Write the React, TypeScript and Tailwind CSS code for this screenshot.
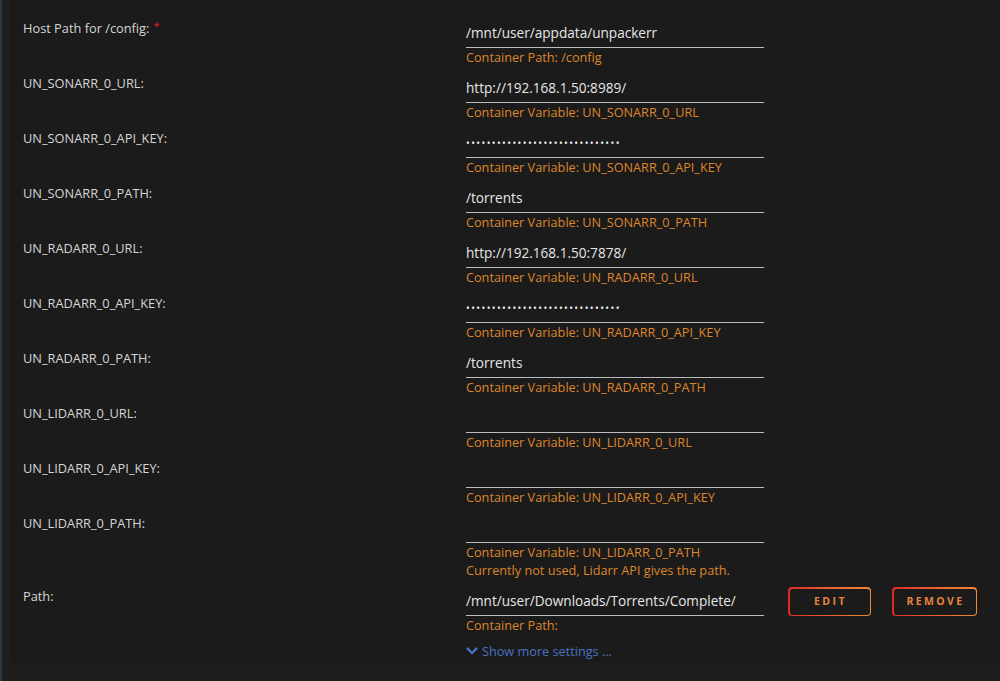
import React from "react";

type Row = {
  label: string;
  required?: boolean;
  value: string;
  password?: boolean;
  desc: string[];
};

const dots = "••••••••••••••••••••••••••••••";

const rows: Row[] = [
  { label: "Host Path for /config:", required: true, value: "/mnt/user/appdata/unpackerr", desc: ["Container Path: /config"] },
  { label: "UN_SONARR_0_URL:", value: "http://192.168.1.50:8989/", desc: ["Container Variable: UN_SONARR_0_URL"] },
  { label: "UN_SONARR_0_API_KEY:", value: dots, password: true, desc: ["Container Variable: UN_SONARR_0_API_KEY"] },
  { label: "UN_SONARR_0_PATH:", value: "/torrents", desc: ["Container Variable: UN_SONARR_0_PATH"] },
  { label: "UN_RADARR_0_URL:", value: "http://192.168.1.50:7878/", desc: ["Container Variable: UN_RADARR_0_URL"] },
  { label: "UN_RADARR_0_API_KEY:", value: dots, password: true, desc: ["Container Variable: UN_RADARR_0_API_KEY"] },
  { label: "UN_RADARR_0_PATH:", value: "/torrents", desc: ["Container Variable: UN_RADARR_0_PATH"] },
  { label: "UN_LIDARR_0_URL:", value: "", desc: ["Container Variable: UN_LIDARR_0_URL"] },
  { label: "UN_LIDARR_0_API_KEY:", value: "", desc: ["Container Variable: UN_LIDARR_0_API_KEY"] },
  { label: "UN_LIDARR_0_PATH:", value: "", desc: ["Container Variable: UN_LIDARR_0_PATH", "Currently not used, Lidarr API gives the path."] },
];

function GradButton({ text, width }: { text: string; width: string }) {
  return (
    <div className={`h-[29px] self-start rounded-[4px] bg-linear-to-r from-[#e0242a] to-[#f08a34] p-[1.5px] ${width}`}>
      <div className="flex h-full items-center justify-center rounded-[3px] bg-[#1b1b1b] pl-[2px] text-[10.5px] font-bold tracking-[2.4px] text-[#e8843a]">
        {text}
      </div>
    </div>
  );
}

function FieldRow({ row }: { row: Row }) {
  return (
    <div className="flex">
      <div className="w-[456px] shrink-0 pl-[13px] pt-[1px] text-[12.8px] leading-[16px] text-[#d6d6d6]">
        {row.label}
        {row.required && <span className="relative -top-[3px] ml-[4px] text-[11px] text-[#e0222a]">*</span>}
      </div>
      <div className="w-[298px]">
        <div className="flex h-[29px] items-center border-b border-[#bdbdbd] text-[13.6px] text-[#e6e6e6]">
          {row.password ? (
            <span className="text-[10px] leading-none tracking-[1.4px] text-[#f0f0f0]">{row.value}</span>
          ) : (
            row.value
          )}
        </div>
        {row.desc.map((d) => (
          <div key={d} className="text-[12.7px] leading-[18px] text-[#de862a]">
            {d}
          </div>
        ))}
      </div>
    </div>
  );
}

export default function App() {
  return (
    <div
      className="flex h-[681px] w-[1000px] bg-[#1e1e1e]"
      style={{ fontFamily: '"Open Sans", "Noto Sans", sans-serif' }}
    >
      <div className="w-[2px] shrink-0 bg-[#2a3b46]" />
      <div className="flex-1 pl-[8px]">
        <div className="flex h-[663px] flex-col gap-[8px] bg-[#1b1b1b] pt-[19px]">
          {rows.map((r) => (
            <FieldRow key={r.label} row={r} />
          ))}
          <div className="flex">
            <div className="w-[456px] shrink-0 pl-[13px] pt-[1px] text-[12.8px] leading-[16px] text-[#d6d6d6]">Path:</div>
            <div className="w-[298px]">
              <div className="flex h-[29px] items-center border-b border-[#bdbdbd] text-[13.6px] text-[#e6e6e6]">
                /mnt/user/Downloads/Torrents/Complete/
              </div>
              <div className="text-[12.7px] leading-[18px] text-[#de862a]">Container Path:</div>
              <div className="mt-[8px] flex items-center gap-[4px] text-[12.7px] leading-[18px] text-[#4a72c4]">
                <svg width="12" height="12" viewBox="0 0 12 12" className="shrink-0">
                  <path d="M1.5 3.5 L6 8 L10.5 3.5" fill="none" stroke="#4a72c4" strokeWidth="2.4" strokeLinecap="round" strokeLinejoin="round" />
                </svg>
                Show more settings ...
              </div>
            </div>
            <div className="ml-[24px] flex items-start gap-[21px]">
              <GradButton text="EDIT" width="w-[83px]" />
              <GradButton text="REMOVE" width="w-[85px]" />
            </div>
          </div>
        </div>
      </div>
    </div>
  );
}
